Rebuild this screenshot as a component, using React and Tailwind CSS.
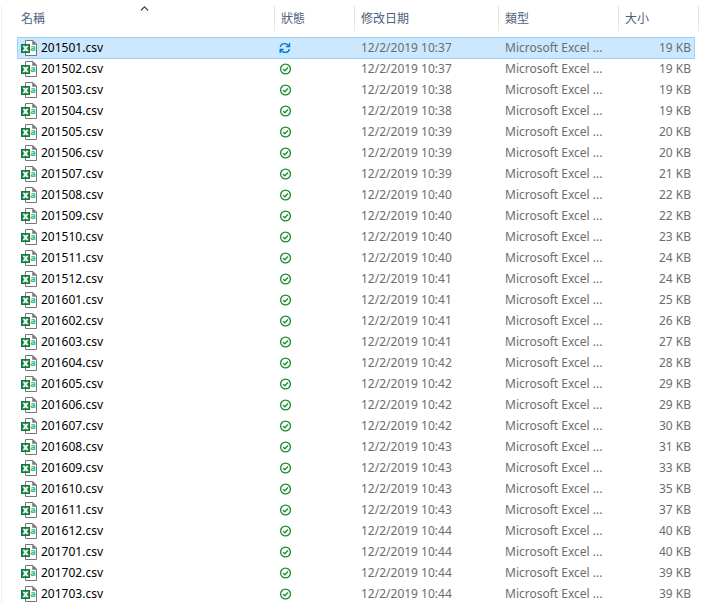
const files = [
  { name: '201501.csv', date: '12/2/2019 10:37', size: '19 KB', syncing: true },
  { name: '201502.csv', date: '12/2/2019 10:37', size: '19 KB' },
  { name: '201503.csv', date: '12/2/2019 10:38', size: '19 KB' },
  { name: '201504.csv', date: '12/2/2019 10:38', size: '19 KB' },
  { name: '201505.csv', date: '12/2/2019 10:39', size: '20 KB' },
  { name: '201506.csv', date: '12/2/2019 10:39', size: '20 KB' },
  { name: '201507.csv', date: '12/2/2019 10:39', size: '21 KB' },
  { name: '201508.csv', date: '12/2/2019 10:40', size: '22 KB' },
  { name: '201509.csv', date: '12/2/2019 10:40', size: '22 KB' },
  { name: '201510.csv', date: '12/2/2019 10:40', size: '23 KB' },
  { name: '201511.csv', date: '12/2/2019 10:40', size: '24 KB' },
  { name: '201512.csv', date: '12/2/2019 10:41', size: '24 KB' },
  { name: '201601.csv', date: '12/2/2019 10:41', size: '25 KB' },
  { name: '201602.csv', date: '12/2/2019 10:41', size: '26 KB' },
  { name: '201603.csv', date: '12/2/2019 10:41', size: '27 KB' },
  { name: '201604.csv', date: '12/2/2019 10:42', size: '28 KB' },
  { name: '201605.csv', date: '12/2/2019 10:42', size: '29 KB' },
  { name: '201606.csv', date: '12/2/2019 10:42', size: '29 KB' },
  { name: '201607.csv', date: '12/2/2019 10:42', size: '30 KB' },
  { name: '201608.csv', date: '12/2/2019 10:43', size: '31 KB' },
  { name: '201609.csv', date: '12/2/2019 10:43', size: '33 KB' },
  { name: '201610.csv', date: '12/2/2019 10:43', size: '35 KB' },
  { name: '201611.csv', date: '12/2/2019 10:43', size: '37 KB' },
  { name: '201612.csv', date: '12/2/2019 10:44', size: '40 KB' },
  { name: '201701.csv', date: '12/2/2019 10:44', size: '40 KB' },
  { name: '201702.csv', date: '12/2/2019 10:44', size: '39 KB' },
  { name: '201703.csv', date: '12/2/2019 10:44', size: '39 KB' },
];

const columns = [
  { label: '狀態', width: 'w-20' },
  { label: '修改日期', width: 'w-36' },
  { label: '類型', width: 'w-[120px]' },
  { label: '大小', width: 'w-[77px]' },
];

function CsvIcon() {
  return (
    <svg className="shrink-0" width="16" height="16" viewBox="0 0 16 16" aria-hidden="true">
      <path d="M4.5 .5h7.500l3.500 3.500v11.500h-11z" fill="#fff" stroke="#767676" />
      <path d="M11.500 .5v4h4z" fill="#767676" stroke="#767676" strokeWidth=".5" />
      <rect x="0" y="4" width="9" height="9" fill="#107c41" />
      <text x="4.500" y="11" fontSize="9" fontWeight="800" fill="#fff" stroke="#fff" strokeWidth=".3" textAnchor="middle">x</text>
      <text x="12" y="11" fontSize="9" fontWeight="700" fill="#33c481" stroke="#33c481" strokeWidth=".2" textAnchor="middle">a</text>
    </svg>
  );
}

function SyncIcon() {
  return (
    <svg width="12" height="12" viewBox="0 0 12 12" fill="none" stroke="#0078d7" strokeWidth="1.4" role="img" aria-label="同步中">
      <path d="M1.200 5C1.700 2.900 3.400 1.600 5.600 1.600c1.800 0 3.200.9 4.100 2.600M10.500 1v3.600H7" />
      <path d="M10.500 7c-.5 2.100-2.200 3.400-4.400 3.400-1.800 0-3.200-.9-4.100-2.600M1.200 11V7.400h3.500" />
    </svg>
  );
}

function SyncedIcon() {
  return (
    <svg width="12" height="12" viewBox="0 0 12 12" fill="none" stroke="#188c2d" strokeWidth="1.3" role="img" aria-label="可用">
      <circle cx="6.500" cy="6" r="4.900" />
      <path d="M4 6.100l1.800 1.700L9 4.500" />
    </svg>
  );
}

function FileRow({ file }) {
  const cell = file.syncing
    ? 'h-[21px] p-0 bg-[#cce8ff] border-[#99d1ff] shadow-[inset_0_1px_0_#99d1ff,0_1px_0_#99d1ff]'
    : 'h-[21px] p-0 border-transparent';

  return (
    <tr aria-selected={!!file.syncing} className="text-[#6d6d6d]">
      <td className={`${cell} border-l pl-[3px] text-black`}>
        <div className="flex items-center gap-1">
          <CsvIcon />
          <span>{file.name}</span>
        </div>
      </td>
      <td className={cell}>
        <div className="flex pl-[5px]">{file.syncing ? <SyncIcon /> : <SyncedIcon />}</div>
      </td>
      <td className={`${cell} pl-[7px]`}>{file.date}</td>
      <td className={`${cell} pl-[7px]`}>Microsoft Excel ...</td>
      <td className={`${cell} border-r pr-[3px] text-right`}>{file.size}</td>
    </tr>
  );
}

export default function App() {
  return (
    <main className="bg-white pt-1.5 pb-0.5 pl-px font-['Noto_Sans','Noto_Sans_CJK_TC',sans-serif] text-[12px] leading-5">
      <div className="border-l border-[#f0f0f0] pr-1.5 pl-[15px]">
        <table className="w-full table-fixed border-separate border-spacing-0 whitespace-nowrap">
          <thead>
            <tr className="text-left text-[#4c607a]">
              <th scope="col" aria-sort="ascending" className="relative p-0 pb-1.5 font-normal">
                <button type="button" className="block h-[25px] w-full pl-1 text-left">名稱</button>
                <svg className="absolute top-0 left-1/2 -ml-1.5" width="9" height="5" viewBox="0 0 9 5" fill="none" stroke="#444" strokeWidth="1.2" aria-hidden="true">
                  <path d="M.9 4.500l3.600-3.600 3.600 3.600" />
                </svg>
              </th>
              {columns.map(c => (
                <th key={c.label} scope="col" className={`${c.width} p-0 pb-1.5 font-normal`}>
                  <button type="button" className="block h-[25px] w-full border-l border-[#e5e5e5] pl-1.5 text-left">{c.label}</button>
                </th>
              ))}
              <td className="w-1 p-0 pb-1.5">
                <div className="h-[25px] border-r border-[#e5e5e5]" />
              </td>
            </tr>
          </thead>
          <tbody>
            {files.map(f => <FileRow key={f.name} file={f} />)}
          </tbody>
        </table>
      </div>
    </main>
  );
}
